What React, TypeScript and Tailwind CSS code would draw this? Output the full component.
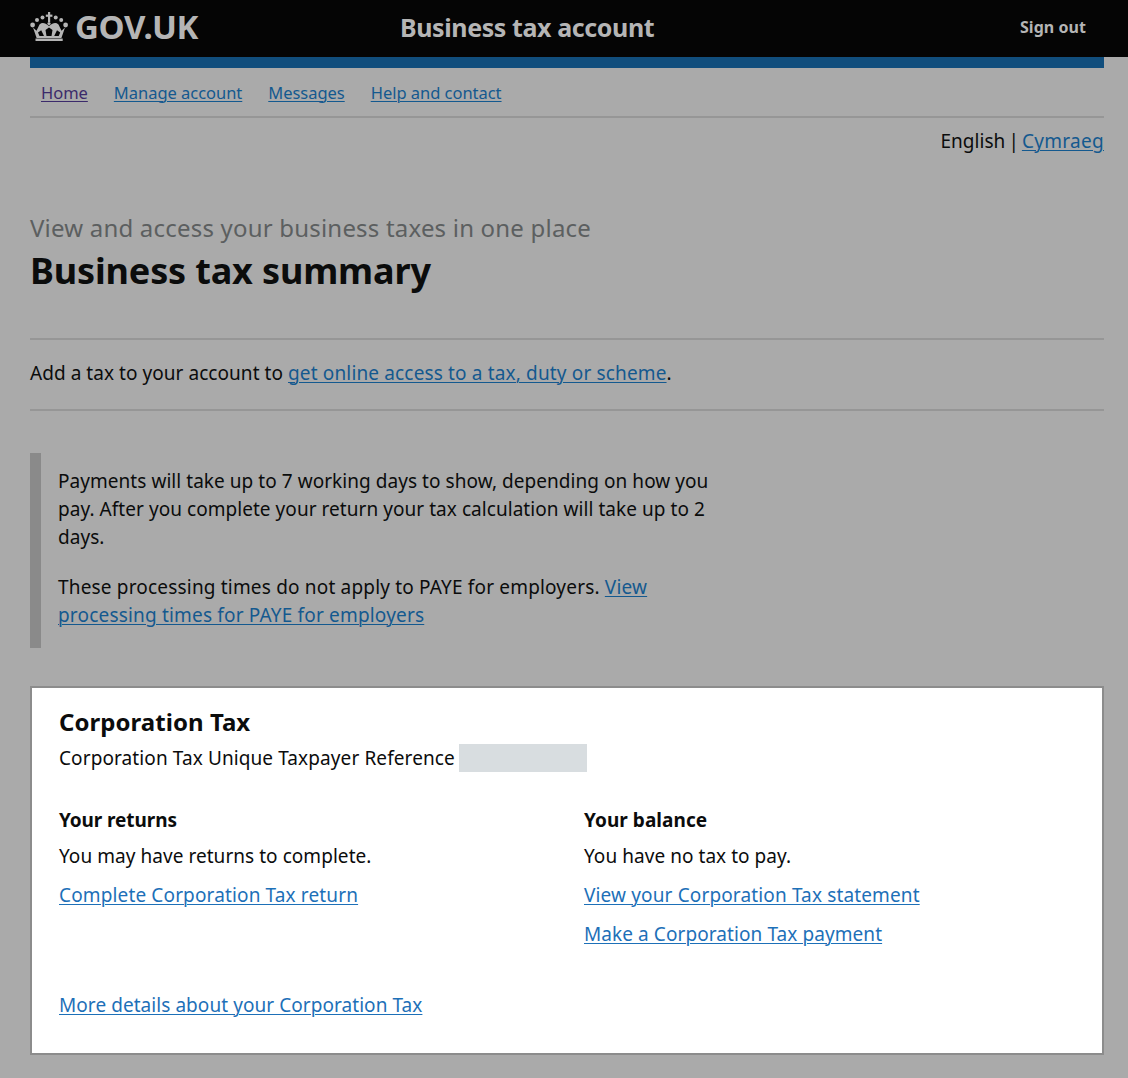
// Business tax account summary page
function Crown() {
  return (
    <svg viewBox="0 0 38 29" className="h-[29px] w-[38px] shrink-0 text-[#b5b5b5]" fill="currentColor">
      <rect x="18" y="0" width="2.2" height="10" />
      <rect x="15.8" y="2.6" width="6.6" height="2.2" />
      <circle cx="12.5" cy="5.5" r="2" />
      <circle cx="25.7" cy="5.5" r="2" />
      <circle cx="7" cy="8" r="2" />
      <circle cx="31.2" cy="8" r="2" />
      <circle cx="2.6" cy="13" r="2.4" />
      <circle cx="35.6" cy="13" r="2.4" />
      <circle cx="19" cy="11.5" r="1.6" />
      <path
        fillRule="evenodd"
        d="M3 15.5l3.5 3.2 3-6.2c2.8-2.4 5.6-1.6 9.5 1.6 3.9-3.2 6.7-4 9.5-1.6l3 6.2 3.500-3.200-3.600 10.500h-24.800zM8 20.500l1.500 3.500h4.500l-2.800-5.800zM15.500 18l1 6h5l1-6-3.500-2.500zM30.200 20.500l-1.500 3.500h-4.500l2.800-5.800z"
      />
      <rect x="5.500" y="26.500" width="27.200" height="2.500" />
    </svg>
  );
}

const link = "text-[#14598f] underline underline-offset-2 decoration-1";
const cardLink = "block text-[#1d70b8] underline underline-offset-2 decoration-1";

export default function App() {
  return (
    <div className="min-h-[1078px] bg-[#aaaaaa] text-[#0b0c0c] text-[19px] leading-[28px] tracking-[0.05px] font-['Noto_Sans','Open_Sans',sans-serif]">
      <header className="flex h-[57px] items-center bg-[#050505] pb-[4px] pl-[30px] pr-[42px] text-[#b5b5b5]">
        <div className="flex w-[370px] items-center gap-[7px]">
          <Crown />
          <span className="text-[33px] font-bold tracking-[-0.3px]">GOV.UK</span>
        </div>
        <span className="flex-1 text-[25px] font-bold tracking-[-0.4px]">Business tax account</span>
        <span className="text-[16px] font-bold">Sign out</span>
      </header>

      <div className="pl-[30px] pr-[24px]">
        <div className="h-[11px] bg-[#114e7d]" />
        <nav className="flex h-[50px] items-center gap-[26px] border-b-2 border-[#969696] pl-[11px] pt-[1px] text-[16.500px] tracking-[-0.03px]">
          <a className="text-[#3b2a6b] underline underline-offset-2">Home</a>
          <a className={link}>Manage account</a>
          <a className={link}>Messages</a>
          <a className={link}>Help and contact</a>
        </nav>
        <p className="mt-[9px] text-right">
          English<span className="mx-[3px]">|</span>
          <a className={`${link} tracking-[0.3px]`}>Cymraeg</a>
        </p>

        <p className="mt-[58px] text-[24px] leading-[30px] tracking-[0.2px] text-[#5c5f60]">
          View and access your business taxes in one place
        </p>
        <h1 className="mt-[3px] text-[36px] leading-[50px] font-bold tracking-[-0.15px]">Business tax summary</h1>

        <div className="mt-[42px] flex h-[73px] items-center border-y-2 border-[#969696] pb-[4px]">
          <p>
            Add a tax to your account to{" "}
            <a className={`${link} tracking-[0.15px]`}>get online access to a tax, duty or scheme</a>.
          </p>
        </div>

        <div className="mt-[42px] h-[195px] border-l-[11px] border-[#8a8a8a] pl-[17px] pt-[14px]">
          <p className="w-[660px]">
            Payments will take up to 7 working days to show, depending on how you pay. After you complete your return
            your tax calculation will take up to 2 days.
          </p>
          <p className="mt-[22px] w-[640px] tracking-[0.18px]">
            These processing times do not apply to PAYE for employers. <a className={link}>View</a>{" "}
            <a className={link}>processing times for PAYE for employers</a>
          </p>
        </div>

        <section className="mt-[38px] h-[369px] border-2 border-[#8c8c8c] bg-white pl-[27px] pt-[18px]">
          <h2 className="text-[24px] leading-[32px] font-bold">Corporation Tax</h2>
          <div className="mt-[6px] flex h-[28px] items-center">
            <span className="tracking-[0.1px]">Corporation Tax Unique Taxpayer Reference</span>
            <span className="ml-[4px] h-[28px] w-[128px] bg-[#d8dde0]" />
          </div>
          <div className="mt-[34px] grid grid-cols-[525px_1fr]">
            <div>
              <h3 className="font-bold tracking-[-0.1px]">Your returns</h3>
              <p className="mt-[8px]">You may have returns to complete.</p>
              <a className={`mt-[11px] tracking-[0.14px] ${cardLink}`}>Complete Corporation Tax return</a>
            </div>
            <div>
              <h3 className="font-bold">Your balance</h3>
              <p className="mt-[8px]">You have no tax to pay.</p>
              <a className={`mt-[11px] tracking-[0.14px] ${cardLink}`}>View your Corporation Tax statement</a>
              <a className={`mt-[11px] tracking-[0.08px] ${cardLink}`}>Make a Corporation Tax payment</a>
            </div>
          </div>
          <a className={`mt-[43px] tracking-[0.06px] ${cardLink}`}>More details about your Corporation Tax</a>
        </section>
      </div>
    </div>
  );
}
